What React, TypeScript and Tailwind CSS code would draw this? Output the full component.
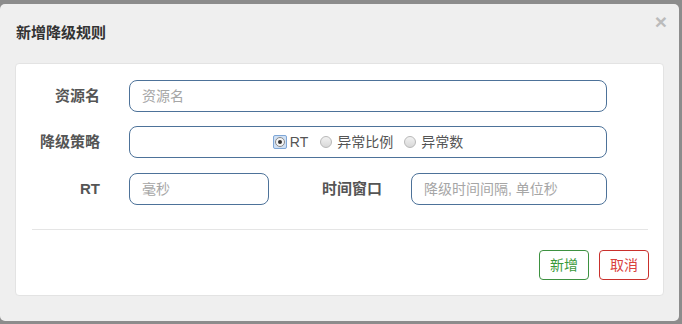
import React from "react";

function Radio({ checked }: { checked?: boolean }) {
  if (checked) {
    return (
      <span className="flex h-[14px] w-[14px] items-center justify-center rounded-[2px] border border-[#7ea6d6] bg-[#cfe0f5]">
        <span className="flex h-[10px] w-[10px] items-center justify-center rounded-full border border-[#8a8a8a] bg-[#f4f4f4]">
          <span className="h-[4px] w-[4px] rounded-full bg-[#333]" />
        </span>
      </span>
    );
  }
  return (
    <span className="flex h-[12px] w-[12px] items-center justify-center rounded-full border border-[#b8b8b8] bg-gradient-to-b from-[#f2f2f2] to-[#d8d8d8]" />
  );
}

const inputCls =
  "h-[32px] rounded-[8px] border border-[#4d7299] bg-white px-[12px] text-[14px] text-[#333] placeholder:text-[#a6a6a6] outline-none";

export default function App() {
  return (
    <div
      className="h-[324px] w-[682px] bg-[#8c8c8c] pt-[4px]"
      style={{ fontFamily: '"Liberation Sans", "Noto Sans CJK SC", sans-serif' }}
    >
      <div className="flex h-[317px] w-[679px] flex-col rounded-[5px] bg-[#efefef]">
        <div className="relative flex h-[59px] items-center pl-[16px]">
          <span className="text-[15px] font-bold text-[#333]">新增降级规则</span>
          <span className="absolute right-[12px] top-[7px] text-[21px] font-bold leading-none text-[#bbbbbb]">×</span>
        </div>
        <div className="ml-[15px] flex h-[233px] w-[649px] flex-col rounded-[4px] border border-[#e3e3e3] bg-white">
          <div className="mt-[16px] flex items-center">
            <label className="w-[84px] text-right text-[15px] font-bold text-[#555]">资源名</label>
            <input className={`ml-[29px] w-[478px] ${inputCls}`} placeholder="资源名" />
          </div>
          <div className="mt-[14px] flex items-center">
            <label className="w-[84px] text-right text-[15px] font-bold text-[#555]">降级策略</label>
            <div className="ml-[29px] flex h-[32px] w-[478px] items-center justify-center rounded-[8px] border border-[#4d7299] text-[14px] text-[#555]">
              <Radio checked />
              <span className="ml-[3px]">RT</span>
              <span className="ml-[12px]"><Radio /></span>
              <span className="ml-[5px]">异常比例</span>
              <span className="ml-[11px]"><Radio /></span>
              <span className="ml-[5px]">异常数</span>
            </div>
          </div>
          <div className="mt-[15px] flex items-center">
            <label className="w-[84px] text-right text-[15px] font-bold text-[#555]">RT</label>
            <input className={`ml-[29px] w-[140px] ${inputCls}`} placeholder="毫秒" />
            <label className="w-[113px] text-right text-[15px] font-bold text-[#555]">时间窗口</label>
            <input className={`ml-[29px] w-[196px] ${inputCls}`} placeholder="降级时间间隔, 单位秒" />
          </div>
          <div className="ml-[16px] mt-[24px] h-px w-[616px] bg-[#e5e5e5]" />
          <div className="mt-[20px] flex justify-end gap-[10px] pr-[14px]">
            <button className="h-[30px] w-[50px] rounded-[4px] border border-[#3d9140] bg-white text-[14px] text-[#3a9a3a]">新增</button>
            <button className="h-[30px] w-[50px] rounded-[4px] border border-[#c9302c] bg-white text-[14px] text-[#d9413c]">取消</button>
          </div>
        </div>
      </div>
    </div>
  );
}
